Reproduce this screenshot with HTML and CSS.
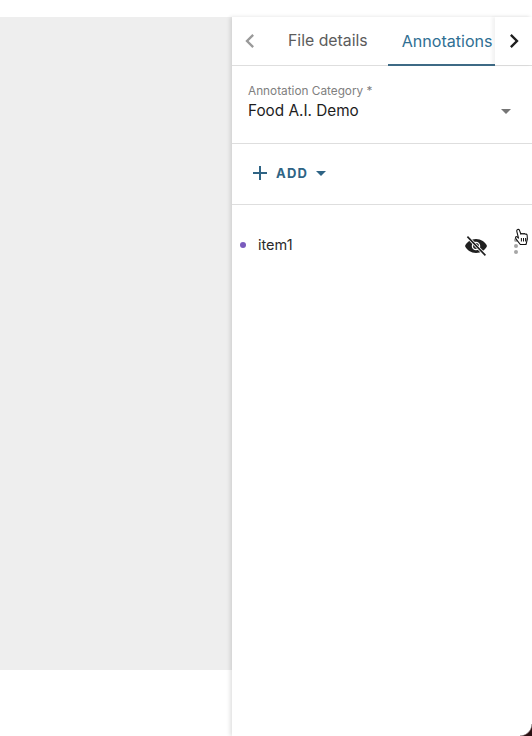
FILE: index.html
```html
<!DOCTYPE html>
<html lang="en">
<head>
    <meta charset="UTF-8">
    <meta name="viewport" content="width=device-width, initial-scale=1.0">
    <title>Annotations</title>
    <link rel="stylesheet" href="styles.css">
</head>
<body>
    <div class="page">
        <div class="viewer">
            <div class="viewer-canvas"></div>
            <div class="viewer-footer"></div>
        </div>

        <div class="panel">
            <div class="tabs">
                <button class="tab-arrow prev" aria-label="Previous">
                    <svg width="28" height="28" viewBox="0 0 24 24"><path d="M15.41 7.41 14 6l-6 6 6 6 1.41-1.41L10.83 12z"/></svg>
                </button>
                <div class="tab-list">
                    <div class="tab">File details</div>
                    <div class="tab active">Annotations</div>
                </div>
                <button class="tab-arrow next" aria-label="Next">
                    <svg width="28" height="28" viewBox="0 0 24 24"><path d="M8.59 16.59 10 18l6-6-6-6-1.41 1.41L13.17 12z"/></svg>
                </button>
            </div>

            <div class="category">
                <div class="category-text">
                    <div class="category-label">Annotation Category *</div>
                    <div class="category-value">Food A.I. Demo</div>
                </div>
                <span class="select-caret"></span>
            </div>

            <div class="add-row">
                <button class="add-btn">
                    <svg width="24" height="24" viewBox="0 0 24 24"><path d="M19 13h-6v6h-2v-6H5v-2h6V5h2v6h6z"/></svg>
                    <span>ADD</span>
                    <span class="add-caret"></span>
                </button>
            </div>

            <div class="item">
                <span class="item-dot"></span>
                <span class="item-name">item1</span>
                <svg class="item-eye" width="24" height="24" viewBox="0 0 24 24"><path d="M12 5C7 5 2.73 8.11 1 12c1.730 3.890 6 7 11 7s9.270-3.110 11-7c-1.730-3.890-6-7-11-7z"/><circle cx="12" cy="12" r="3.600" fill="none" stroke="#fff" stroke-width="1.300"/><path d="M3.400 2.600 21.400 21.400" stroke="#fff" stroke-width="3.200"/><path d="M3.400 2.600 21.400 21.400" stroke="#1f1f1f" stroke-width="1.600"/></svg>
                <div class="item-more">
                    <span></span>
                    <span></span>
                    <span></span>
                </div>
                <svg class="cursor" width="18" height="20" viewBox="0 0 18 20"><path d="M4.600 1.600c.9-.5 1.700.1 2 1l1.300 3.700c.2-.9 1.700-1 2.200-.2.3-.7 1.700-.7 2.100.2.5-.5 1.700-.2 1.900.7.5 2.300.3 4.700-.4 6.800l-.7 2.700H7.300L3.500 11.600c-.7-.9-1.500-2-.8-2.700.7-.6 1.800.1 2.800 1.300L3.800 3.400c-.2-.7.2-1.500.8-1.800z" fill="#fff" stroke="#111" stroke-width="1.100" stroke-linejoin="round"/><path d="M8.400 10v3.500M10.500 10v3.500M12.600 10v3.500" stroke="#111" stroke-width="1"/></svg>
            </div>
        </div>
    </div>
</body>
</html>
```

FILE: styles.css
```css
* {
    margin: 0;
    padding: 0;
    box-sizing: border-box;
}

html, body {
    height: 100%;
    overflow: hidden;
}

body {
    font-family: 'Inter', 'Roboto', sans-serif;
    background: #fff;
    color: #1d1d1d;
}

button {
    background: none;
    border: none;
    font-family: inherit;
}

.page {
    display: flex;
    height: 736px;
    padding-top: 17px;
}

.viewer {
    width: 232px;
    display: flex;
    flex-direction: column;
}

.viewer-canvas {
    height: 653px;
    background: #eeeeee;
}

.viewer-footer {
    flex: 1;
    background: #fff;
}

.panel {
    flex: 1;
    background: #fff;
    box-shadow: -2px 0 4px rgba(0, 0, 0, 0.12);
    position: relative;
}

/* dark sliver where the rounded window corner shows */
.panel::after {
    content: "";
    position: absolute;
    right: 0;
    bottom: 0;
    width: 12px;
    height: 12px;
    background: radial-gradient(circle at top left, transparent 11px, #2a0f12 12.5px);
}

.tabs {
    display: flex;
    height: 49px;
    border-bottom: 1px solid #dedede;
}

.tab-arrow {
    display: flex;
    align-items: center;
    justify-content: center;
    flex-shrink: 0;
}

.tab-arrow.prev {
    width: 35px;
}

.tab-arrow.prev svg {
    fill: #9a9a9a;
}

.tab-arrow.next {
    width: 37px;
    margin-left: auto;
    box-shadow: -3px 0 3px rgba(0, 0, 0, 0.05);
}

.tab-arrow.next svg {
    fill: #1f1f1f;
}

.tab-list {
    display: flex;
    margin-left: 1px;
}

.tab {
    height: 49px;
    line-height: 48px;
    font-size: 15.8px;
    color: #5c5c5c;
    padding: 0 20px;
    white-space: nowrap;
}

.tab.active {
    width: 107px;
    padding: 0 0 0 14px;
    font-size: 16.1px;
    overflow: hidden;
    color: #2f6f93;
    border-bottom: 2px solid #3d6a85;
}

.category {
    height: 78px;
    padding: 18px 16px 0;
    border-bottom: 1px solid #dedede;
    display: flex;
    justify-content: space-between;
    align-items: flex-start;
}

.category-label {
    font-size: 11.8px;
    line-height: 14px;
    color: #808080;
}

.category-value {
    font-size: 15.3px;
    line-height: 20px;
    margin-top: 3px;
    color: #1d1d1d;
}

.select-caret {
    width: 0;
    height: 0;
    margin-top: 25px;
    margin-right: 5px;
    border-left: 5px solid transparent;
    border-right: 5px solid transparent;
    border-top: 5px solid #757575;
}

.add-row {
    height: 61px;
    padding: 0 0 2px 16px;
    border-bottom: 1px solid #dedede;
    display: flex;
    align-items: center;
}

.add-btn {
    display: flex;
    align-items: center;
    color: #2f6485;
    font-size: 13px;
    font-weight: 700;
    letter-spacing: 1.2px;
}

.add-btn svg {
    fill: #2f6485;
    margin-right: 4px;
}

.add-caret {
    width: 0;
    height: 0;
    margin-left: 8px;
    border-left: 5px solid transparent;
    border-right: 5px solid transparent;
    border-top: 5px solid #2f6485;
}

.item {
    position: relative;
    display: flex;
    align-items: center;
    height: 80px;
    padding-left: 8px;
}

.item-dot {
    width: 6px;
    height: 6px;
    border-radius: 50%;
    background: #7a5bbd;
}

.item-name {
    margin: 0 0 2px 12px;
    font-size: 14.5px;
    color: #2a2a2a;
}

.item-eye {
    margin-left: auto;
    fill: #1f1f1f;
    margin-right: 26px;
    margin-top: 2px;
}

.item-more {
    width: 4px;
    margin-right: 14px;
    margin-top: 2px;
    display: flex;
    flex-direction: column;
    gap: 2px;
}

.item-more span {
    width: 4px;
    height: 4px;
    border-radius: 50%;
    background: #a6a6a6;
}

.cursor {
    position: absolute;
    left: 281px;
    top: 23px;
}
```
